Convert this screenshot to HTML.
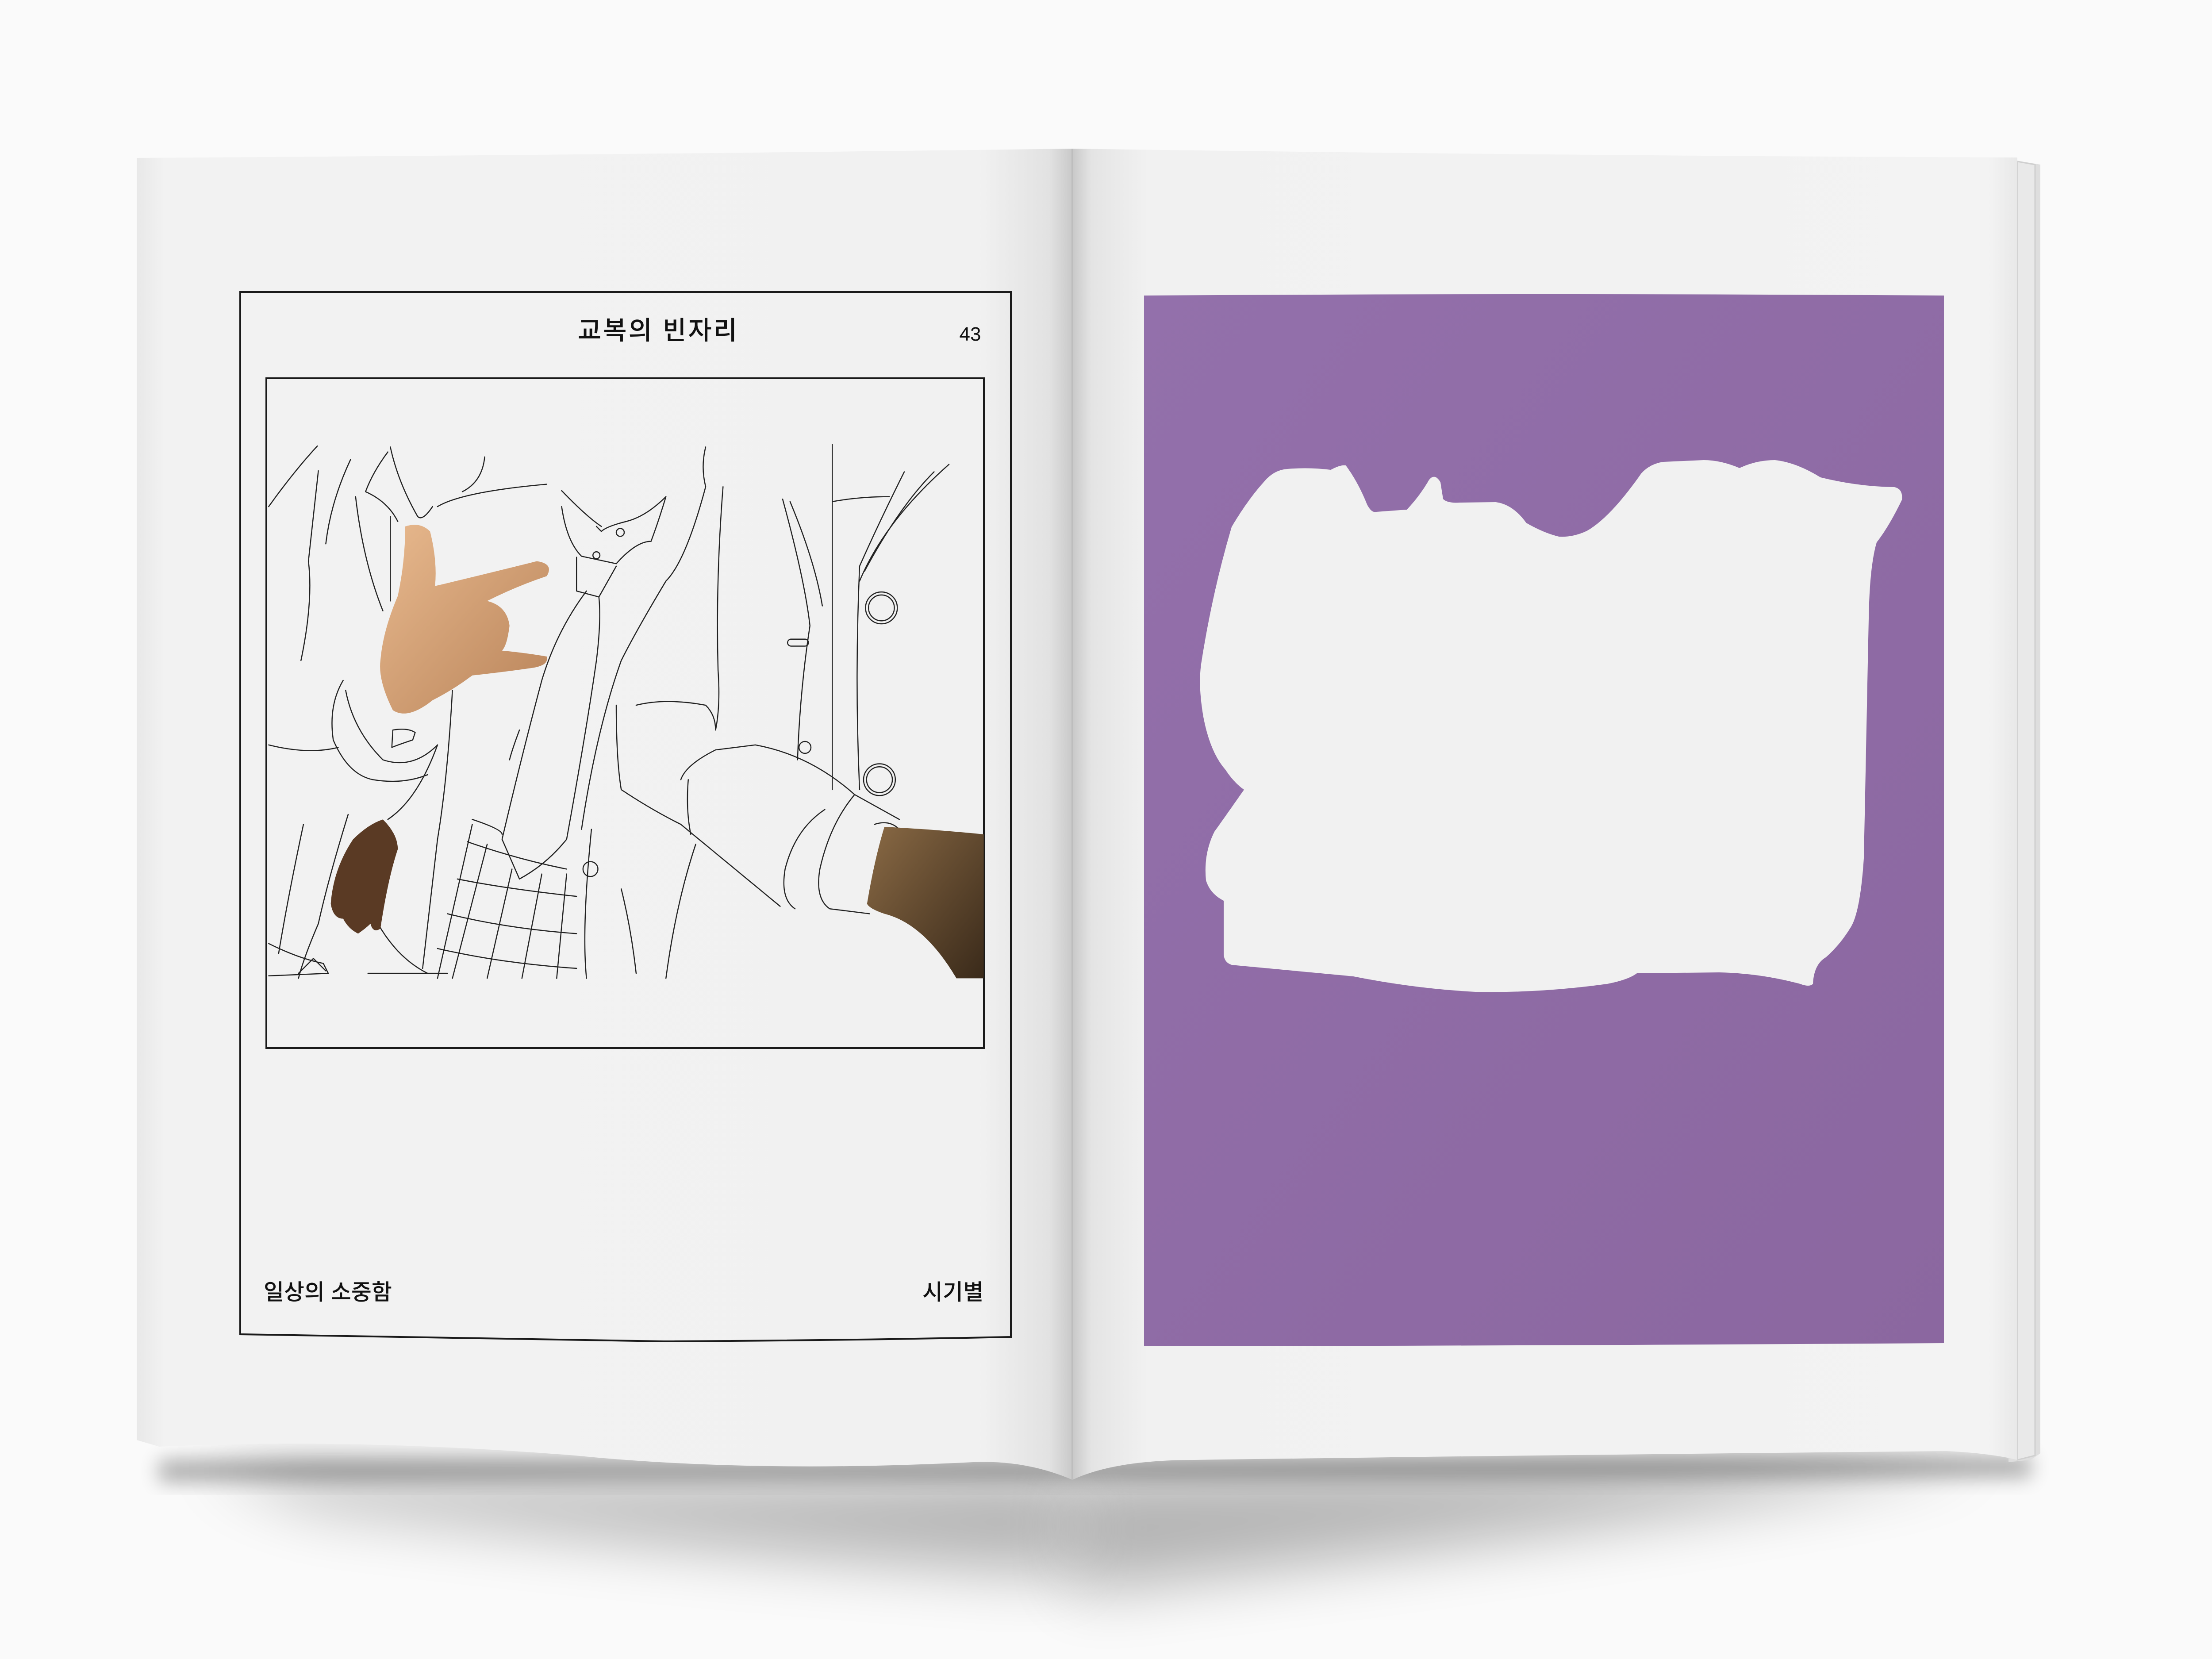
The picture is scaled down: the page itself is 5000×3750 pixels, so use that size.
<!DOCTYPE html>
<html><head><meta charset="utf-8"><style>
html,body{margin:0;padding:0;background:#fafafa;}
svg{display:block}
</style></head><body>
<svg width="5000" height="3750" viewBox="0 0 5000 3750" xmlns="http://www.w3.org/2000/svg">
<defs>
<filter id="blur" x="-20%" y="-50%" width="140%" height="200%"><feGaussianBlur stdDeviation="70"/></filter>
<filter id="blur2" x="-20%" y="-50%" width="140%" height="200%"><feGaussianBlur stdDeviation="22"/></filter>
<linearGradient id="lg" x1="0" x2="1" y1="0" y2="0">
<stop offset="0" stop-color="#e8e8e8"/><stop offset="0.03" stop-color="#f2f2f2"/><stop offset="0.9" stop-color="#f1f1f1"/><stop offset="0.975" stop-color="#e2e2e2"/><stop offset="1" stop-color="#c9c9c9"/>
</linearGradient>
<linearGradient id="rg" x1="0" x2="1" y1="0" y2="0">
<stop offset="0" stop-color="#c8c8c8"/><stop offset="0.02" stop-color="#e4e4e4"/><stop offset="0.08" stop-color="#f1f1f1"/><stop offset="0.97" stop-color="#f3f3f3"/><stop offset="1" stop-color="#e8e8e8"/>
</linearGradient>
<linearGradient id="pg" x1="0" x2="1" y1="0" y2="1">
<stop offset="0" stop-color="#9370ab"/><stop offset="1" stop-color="#8b67a0"/>
</linearGradient>
<linearGradient id="skin" x1="0" x2="1" y1="0" y2="1">
<stop offset="0" stop-color="#e8b98e"/><stop offset="1" stop-color="#b9845a"/>
</linearGradient>
<linearGradient id="arm" x1="0" x2="1" y1="0" y2="1">
<stop offset="0" stop-color="#8a6a45"/><stop offset="1" stop-color="#3a2a1a"/>
</linearGradient>
</defs>

<!-- shadow -->
<path d="M450 3300 Q1300 3380 2300 3330 L2424 3330 L2424 3560 Q1500 3500 700 3400 Z" fill="#000" opacity="0.28" filter="url(#blur)"/>
<path d="M2424 3330 L4500 3290 Q3800 3440 2424 3600 Z" fill="#000" opacity="0.28" filter="url(#blur)"/>
<path d="M360 3300 L4590 3290 L4590 3340 L360 3350 Z" fill="#000" opacity="0.3" filter="url(#blur2)"/>

<!-- page stack right -->
<path d="M4540 360 L4612 372 L4612 3285 L4590 3300 L4540 3305 Z" fill="#dedede"/>
<path d="M4560 365 L4600 372 L4600 3290 L4560 3300 Z" fill="#e9e9e9" stroke="#cfcfcf" stroke-width="3"/>

<!-- left page -->
<path d="M309 357 Q1400 350 2424 336 L2424 3345 Q2320 3300 2200 3305 Q1700 3330 1300 3290 Q800 3250 360 3270 L309 3255 Z" fill="url(#lg)"/>
<!-- right page -->
<path d="M2424 336 Q3500 352 4560 356 L4560 3300 Q4500 3285 4400 3280 Q3400 3290 2700 3300 Q2520 3300 2424 3345 Z" fill="url(#rg)"/>
<line x1="2424" y1="336" x2="2424" y2="3345" stroke="#bdbdbd" stroke-width="4"/>

<!-- left frame -->
<path d="M543 660 L2285 660 L2285 3022 Q1900 3030 1500 3032 Q900 3022 543 3016 Z" fill="none" stroke="#1a1a1a" stroke-width="4"/>
<rect x="602" y="855" width="1622" height="1514" fill="none" stroke="#1a1a1a" stroke-width="4"/>

<text x="1488" y="767" font-family="'Liberation Sans','Noto Sans CJK KR',sans-serif" font-size="58" font-weight="500" text-anchor="middle" fill="#111" letter-spacing="4">교복의 빈자리</text>
<text x="2193" y="770" font-family="'Liberation Sans','Noto Sans CJK KR',sans-serif" font-size="44" text-anchor="middle" fill="#111">43</text>
<text x="596" y="2938" font-family="'Liberation Sans','Noto Sans CJK KR',sans-serif" font-size="50" font-weight="500" fill="#111">일상의 소중함</text>
<text x="2223" y="2938" font-family="'Liberation Sans','Noto Sans CJK KR',sans-serif" font-size="50" font-weight="500" text-anchor="end" fill="#111">시기별</text>

<!-- illustration in zoom coords -->
<g transform="translate(540,640) scale(1.1224)" fill="none" stroke="#222" stroke-width="2.2" stroke-linejoin="round" stroke-linecap="round">
<path d="M60 450 Q110 380 158 328"/>
<path d="M160 378 Q150 470 140 560 Q150 640 125 760"/>
<path d="M225 355 Q185 440 175 525"/>
<path d="M235 430 Q250 560 290 660"/>
<path d="M300 340 Q270 380 255 420 Q300 440 320 480"/>
<path d="M305 330 Q320 400 360 470 Q370 480 390 450"/>
<path d="M495 350 Q490 400 450 420"/>
<path d="M400 450 Q450 420 620 405"/>
<path d="M305 470 L305 640"/>
<path d="M650 418 Q700 470 730 490"/>
<path d="M650 450 Q660 520 690 550 L760 565 Q800 520 830 520 Q845 480 860 430 Q820 470 780 480 Q740 490 730 500 L720 490"/>
<circle cx="768" cy="502" r="8"/><circle cx="720" cy="548" r="7"/>
<path d="M680 552 L680 620 L725 632 L760 570"/>
<path d="M700 620 Q640 700 610 800 Q570 950 530 1120 L565 1200 Q620 1170 660 1120 Q700 900 720 760 Q730 680 725 632"/>
<path d="M940 330 Q930 370 940 410 Q900 560 860 600 Q800 700 770 760 Q720 900 690 1100"/>
<path d="M975 410 Q960 600 965 780 Q970 850 960 900"/>
<path d="M1195 325 L1195 1020"/>
<path d="M1095 435 Q1140 600 1150 690 Q1130 820 1125 960"/>
<path d="M1110 440 Q1160 560 1175 650"/>
<path d="M1195 440 Q1250 430 1310 430"/>
<path d="M1250 600 Q1300 480 1430 365"/>
<path d="M1260 580 Q1330 450 1400 380"/>
<path d="M1340 380 Q1290 480 1250 570 Q1240 800 1250 1020"/>
<path d="M1280 1090 Q1310 1080 1330 1100"/>
<circle cx="1294" cy="654" r="32"/><circle cx="1294" cy="654" r="26"/>
<circle cx="1290" cy="1000" r="32"/><circle cx="1290" cy="1000" r="26"/>
<circle cx="1140" cy="935" r="12"/>
<rect x="1105" y="717" width="42" height="14" rx="7"/>
<path d="M800 850 Q860 835 940 850 Q960 870 960 900"/>
<path d="M760 850 Q760 960 770 1020 Q830 1060 890 1090 Q950 1140 1090 1255"/>
<path d="M890 1000 Q900 970 960 940 L1040 930 Q1150 950 1240 1030 L1330 1080"/>
<path d="M905 1000 Q900 1060 910 1110"/>
<path d="M1240 1030 Q1190 1090 1170 1180 Q1160 1240 1190 1260 L1270 1270"/>
<path d="M1180 1060 Q1120 1100 1100 1180 Q1090 1240 1120 1260"/>
<path d="M920 1130 Q880 1250 860 1400"/>
<path d="M770 1220 Q790 1300 800 1390"/>
<path d="M710 1100 Q690 1300 700 1400"/>
<circle cx="708" cy="1180" r="15"/>
<path d="M565 900 Q550 940 545 960"/>
<path d="M60 930 Q140 950 200 935"/>
<path d="M210 800 Q180 850 190 920 Q220 990 270 1000 Q330 1010 380 990"/>
<path d="M215 820 Q230 900 290 960 Q350 980 400 930"/>
<path d="M310 900 Q340 895 355 905 L350 920 Q320 930 308 935 Z"/>
<path d="M400 930 Q360 1040 300 1080"/>
<path d="M430 820 Q420 1000 400 1120 L370 1380"/>
<path d="M130 1090 Q100 1230 80 1350"/>
<path d="M220 1070 Q180 1200 160 1290 Q130 1360 120 1400"/>
<path d="M60 1330 Q120 1360 170 1370 L180 1390 L60 1395"/>
<path d="M120 1390 L150 1360 L175 1385"/>
<path d="M280 1290 Q320 1360 380 1390"/>
<path d="M470 1080 Q530 1100 530 1110"/>
<path d="M460 1125 Q560 1160 660 1180"/>
<path d="M440 1200 Q540 1220 680 1235"/>
<path d="M420 1270 Q540 1300 680 1310"/>
<path d="M400 1340 Q530 1370 680 1380"/>
<path d="M500 1130 L430 1400"/>
<path d="M550 1180 L500 1400"/>
<path d="M610 1190 L570 1400"/>
<path d="M660 1190 L640 1400"/>
<path d="M470 1090 L400 1400"/>
<path d="M260 1390 L420 1390"/>
</g>
<g transform="translate(540,640) scale(1.1224)">
<path d="M335 490 Q365 480 385 500 Q400 560 395 610 Q480 590 600 560 Q635 565 620 590 Q560 610 500 640 Q540 650 545 690 Q540 730 530 740 Q580 745 620 752 Q625 770 590 775 Q520 785 470 790 Q430 820 390 840 Q340 880 310 860 Q280 800 285 760 Q290 700 320 630 Q335 560 335 490 Z" fill="url(#skin)"/>
<path d="M290 1080 Q320 1110 320 1140 Q300 1200 285 1300 Q270 1310 265 1290 Q255 1300 240 1310 Q220 1300 210 1280 Q190 1280 185 1250 Q190 1180 230 1120 Q260 1090 290 1080 Z" fill="#5a3a24"/>
<path d="M1300 1095 Q1400 1100 1500 1110 L1500 1400 L1445 1400 Q1380 1290 1300 1270 Q1270 1260 1265 1250 Q1280 1160 1300 1095 Z" fill="url(#arm)"/>
</g>

<!-- purple panel -->
<path d="M2586 668 Q3500 662 4394 668 L4394 3036 Q3500 3042 2586 3043 Z" fill="url(#pg)"/>
<path d="M2858 1088 Q2880 1062 2910 1060 Q2960 1056 3008 1062 Q3030 1050 3042 1052 Q3070 1090 3090 1140 Q3100 1160 3111 1157 L3180 1152 Q3210 1120 3230 1085 Q3243 1068 3256 1090 L3262 1128 Q3272 1138 3300 1136 L3381 1135 Q3420 1140 3450 1182 Q3490 1205 3524 1213 Q3555 1215 3587 1200 Q3640 1170 3710 1070 Q3730 1048 3760 1044 L3851 1040 Q3890 1040 3932 1058 Q3970 1040 4012 1040 Q4060 1045 4115 1079 Q4200 1100 4282 1101 Q4302 1105 4299 1130 Q4270 1190 4242 1226 Q4226 1280 4224 1398 L4213 1940 Q4205 2060 4184 2095 Q4160 2135 4127 2164 Q4100 2180 4098 2224 Q4090 2232 4069 2224 Q3980 2200 3886 2198 L3700 2200 Q3680 2215 3633 2224 Q3480 2245 3335 2242 Q3200 2235 3059 2207 L2784 2181 Q2766 2175 2766 2155 L2766 2036 Q2735 2020 2726 1990 Q2720 1930 2745 1880 Q2770 1845 2812 1785 Q2790 1770 2770 1740 Q2735 1700 2720 1620 Q2708 1550 2715 1501 Q2740 1340 2784 1191 Q2820 1130 2858 1088 Z" fill="#f1f1f1"/>
</svg>
</body></html>
